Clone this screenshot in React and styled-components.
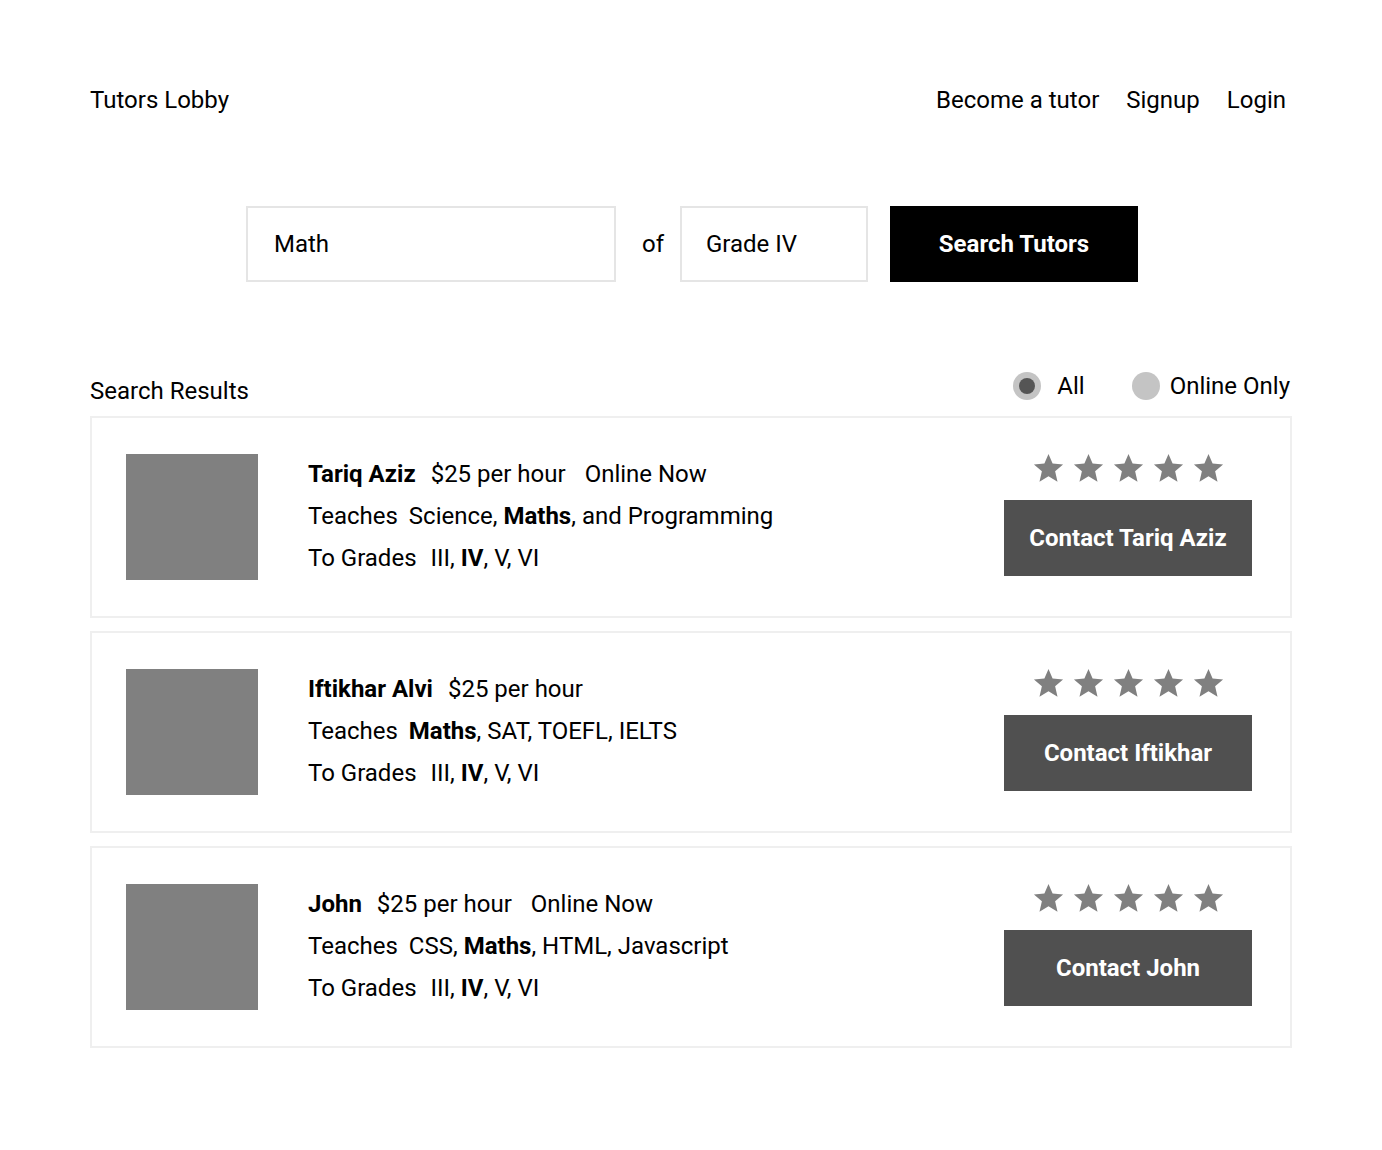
import styled, { createGlobalStyle } from "styled-components";

const GlobalStyle = createGlobalStyle`
  * { box-sizing: border-box; }
  body {
    margin: 0;
    background: #fff;
    color: #000;
    font-family: Roboto, "Liberation Sans", sans-serif;
    font-size: 24px;
  }
`;

const Page = styled.div`
  width: 1202px;
  margin: 0 auto;
  padding-top: 86px;
  padding-bottom: 80px;
`;

const Header = styled.header`
  display: flex;
  justify-content: space-between;
  align-items: center;
`;

const Brand = styled.div`
  font-size: 24px;
`;

const Nav = styled.nav`
  display: flex;
  gap: 27px;
  padding-right: 6px;
`;

const NavLink = styled.a`
  color: #000;
  text-decoration: none;
`;

const SearchRow = styled.div`
  display: flex;
  justify-content: center;
  align-items: center;
  margin-top: 92px;
  padding-left: 2px;
`;

const Field = styled.div`
  width: ${(p) => p.width}px;
  height: 76px;
  border: 2px solid #e5e5e5;
  display: flex;
  align-items: center;
  padding-left: ${(p) => p.pad}px;
  font-size: 24px;
`;

const Of = styled.span`
  margin: 0 16px 0 26px;
`;

const SearchButton = styled.button`
  margin-left: 22px;
  width: 248px;
  height: 76px;
  border: none;
  background: #000;
  color: #fff;
  font-family: Roboto, "Liberation Sans", sans-serif;
  font-size: 24px;
  font-weight: 700;
`;

const ResultsBar = styled.div`
  display: flex;
  justify-content: space-between;
  align-items: center;
  margin-top: 85px;
  margin-bottom: 11px;
`;

const ResultsTitle = styled.div`
  padding-top: 10px;
`;

const Filters = styled.div`
  display: flex;
  align-items: center;
  gap: 47px;
  padding-right: 2px;
`;

const Filter = styled.label`
  display: flex;
  align-items: center;
  gap: ${(p) => p.gap}px;
`;

const Radio = styled.span`
  width: 28px;
  height: 28px;
  border-radius: 50%;
  background: #c4c4c4;
  display: flex;
  align-items: center;
  justify-content: center;

  &::after {
    content: "";
    width: 16px;
    height: 16px;
    border-radius: 50%;
    background: ${(p) => (p.checked ? "#555" : "transparent")};
  }
`;

const CardList = styled.div`
  display: flex;
  flex-direction: column;
  gap: 13px;
`;

const Card = styled.div`
  height: 202px;
  border: 2px solid #efefef;
  display: flex;
  align-items: center;
  padding: 0 38px 0 34px;
`;

const Photo = styled.div`
  width: 132px;
  height: 126px;
  background: #808080;
  flex-shrink: 0;
`;

const Info = styled.div`
  flex: 1;
  margin-left: 50px;
  line-height: 42px;
  margin-top: -2px;
`;

const Line = styled.div`
  white-space: nowrap;
`;

const Name = styled.b`
  margin-right: 15px;
`;

const Price = styled.span`
  margin-right: 19px;
`;

const Label = styled.span`
  margin-right: ${(p) => p.gap}px;
`;

const Side = styled.div`
  display: flex;
  flex-direction: column;
  align-items: center;
  gap: 14px;
  margin-top: -8px;
`;

const Stars = styled.div`
  display: flex;
  gap: 5px;
`;

const ContactButton = styled.button`
  width: 248px;
  height: 76px;
  border: none;
  background: #505050;
  color: #fff;
  font-family: Roboto, "Liberation Sans", sans-serif;
  font-size: 24px;
  font-weight: 700;
`;

function Star() {
  return (
    <svg width="35" height="35" viewBox="0 0 24 24">
      <path
        fill="#808080"
        d="M12 17.27L18.18 21l-1.64-7.03L22 9.24l-7.19-.61L12 2 9.19 8.63 2 9.24l5.46 4.73L5.82 21z"
      />
    </svg>
  );
}

const tutors = [
  {
    name: "Tariq Aziz",
    online: true,
    subjects: ["Science", "Maths", "and Programming"],
    contact: "Contact Tariq Aziz",
  },
  {
    name: "Iftikhar Alvi",
    online: false,
    subjects: ["Maths", "SAT", "TOEFL", "IELTS"],
    contact: "Contact Iftikhar",
  },
  {
    name: "John",
    online: true,
    subjects: ["CSS", "Maths", "HTML", "Javascript"],
    contact: "Contact John",
  },
];

const grades = ["III", "IV", "V", "VI"];

function joinBold(items, bold) {
  return items.map((item, i) => (
    <span key={item}>
      {item === bold ? <b>{item}</b> : item}
      {i < items.length - 1 ? ", " : ""}
    </span>
  ));
}

function TutorCard({ tutor }) {
  return (
    <Card>
      <Photo />
      <Info>
        <Line>
          <Name>{tutor.name}</Name>
          <Price>$25 per hour</Price>
          {tutor.online && <span>Online Now</span>}
        </Line>
        <Line>
          <Label gap={11}>Teaches</Label>
          {joinBold(tutor.subjects, "Maths")}
        </Line>
        <Line>
          <Label gap={14}>To Grades</Label>
          {joinBold(grades, "IV")}
        </Line>
      </Info>
      <Side>
        <Stars>
          {[0, 1, 2, 3, 4].map((i) => (
            <Star key={i} />
          ))}
        </Stars>
        <ContactButton>{tutor.contact}</ContactButton>
      </Side>
    </Card>
  );
}

export default function App() {
  return (
    <>
      <GlobalStyle />
      <Page>
        <Header>
          <Brand>Tutors Lobby</Brand>
          <Nav>
            <NavLink href="#">Become a tutor</NavLink>
            <NavLink href="#">Signup</NavLink>
            <NavLink href="#">Login</NavLink>
          </Nav>
        </Header>

        <SearchRow>
          <Field width={370} pad={26}>Math</Field>
          <Of>of</Of>
          <Field width={188} pad={24}>Grade IV</Field>
          <SearchButton>Search Tutors</SearchButton>
        </SearchRow>

        <ResultsBar>
          <ResultsTitle>Search Results</ResultsTitle>
          <Filters>
            <Filter gap={16}>
              <Radio checked />
              All
            </Filter>
            <Filter gap={10}>
              <Radio />
              Online Only
            </Filter>
          </Filters>
        </ResultsBar>

        <CardList>
          {tutors.map((t) => (
            <TutorCard key={t.name} tutor={t} />
          ))}
        </CardList>
      </Page>
    </>
  );
}
